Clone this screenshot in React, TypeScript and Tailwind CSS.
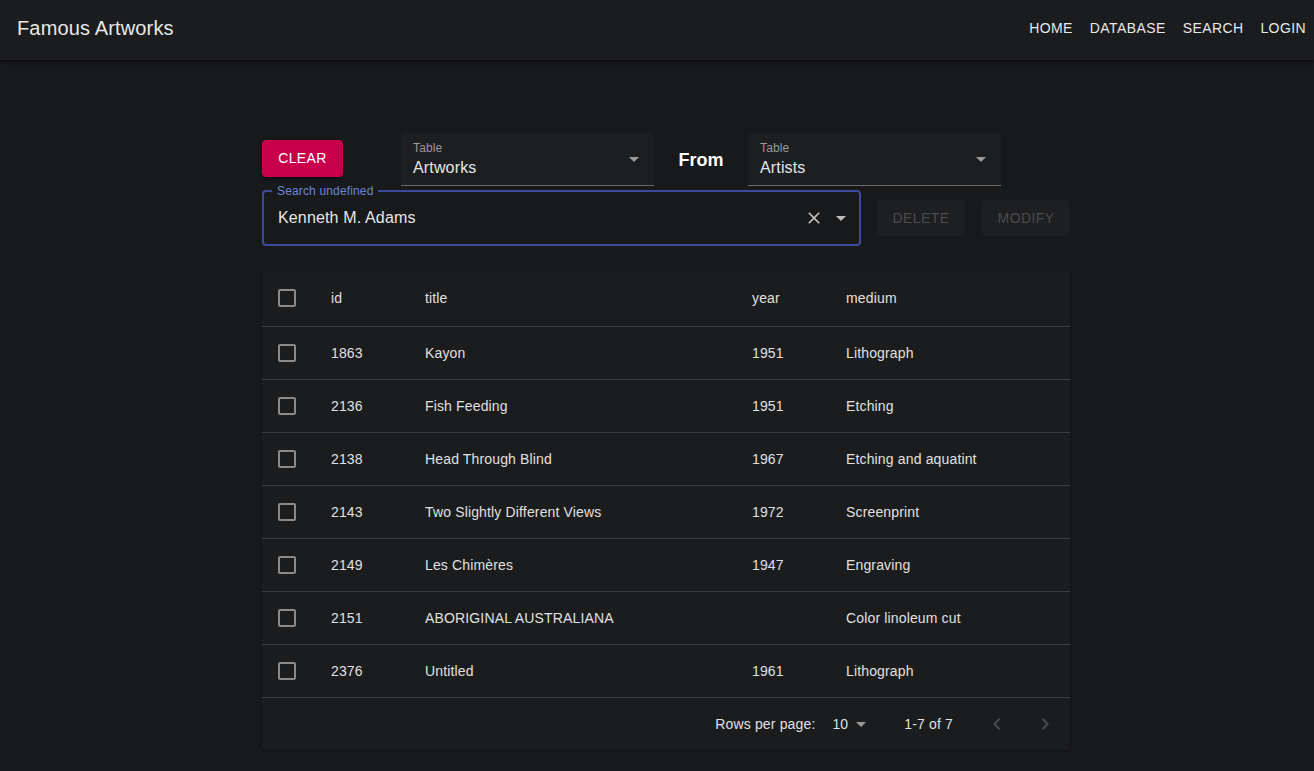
import React from 'react';

const rows = [
  { id: 1863, title: 'Kayon', year: '1951', medium: 'Lithograph' },
  { id: 2136, title: 'Fish Feeding', year: '1951', medium: 'Etching' },
  { id: 2138, title: 'Head Through Blind', year: '1967', medium: 'Etching and aquatint' },
  { id: 2143, title: 'Two Slightly Different Views', year: '1972', medium: 'Screenprint' },
  { id: 2149, title: 'Les Chimères', year: '1947', medium: 'Engraving' },
  { id: 2151, title: 'ABORIGINAL AUSTRALIANA', year: '', medium: 'Color linoleum cut' },
  { id: 2376, title: 'Untitled', year: '1961', medium: 'Lithograph' },
];

function Caret({ className = '' }: { className?: string }) {
  return (
    <svg viewBox="0 0 24 24" className={className} fill="currentColor">
      <path d="M7 10l5 5 5-5z" />
    </svg>
  );
}

function Checkbox() {
  return <div className="w-[18px] h-[18px] rounded-[2px] border-2 border-[#8a8a8a]" />;
}

function TableSelect({ value }: { value: string }) {
  return (
    <div className="relative w-[253px] h-[53px] bg-[#1d1e20] rounded-t border-b border-[#6b6b6b] px-3 pt-[8px]">
      <div className="text-[12px] leading-[14px] text-[#9a9a9a] tracking-[0.15px]">Table</div>
      <div className="text-[16px] leading-[22px] text-[#e6e6e6] mt-[2px] tracking-[0.15px]">{value}</div>
      <Caret className="absolute right-[8px] top-[14px] w-6 h-6 text-[#9a9a9a]" />
    </div>
  );
}

export default function App() {
  return (
    <div className="min-h-[771px] bg-[#18191b] text-[#e0e0e0]" style={{ fontFamily: '"Liberation Sans", Arial, sans-serif' }}>
      <header className="h-[60px] bg-[#1b1c1e] shadow-[0_2px_4px_rgba(0,0,0,0.5)] flex items-center justify-between pl-[17px] pr-[8px] pb-[4px]">
        <div className="text-[20px] text-[#e8e8e8] tracking-[0.15px]">Famous Artworks</div>
        <nav className="flex items-center gap-[17px] text-[14px] text-[#e8e8e8] tracking-[0.4px]">
          <span>HOME</span>
          <span>DATABASE</span>
          <span>SEARCH</span>
          <span>LOGIN</span>
        </nav>
      </header>

      <main className="w-[808px] ml-[262px] pt-[73px]">
        <div className="flex items-center h-[53px]">
          <button className="w-[81px] h-[37px] rounded bg-[#c8004b] text-white text-[14px] tracking-[0.4px] mt-[-2px] shadow-[0_2px_3px_rgba(0,0,0,0.4)]">
            CLEAR
          </button>
          <div className="ml-[58px]">
            <TableSelect value="Artworks" />
          </div>
          <div className="w-[94px] text-center text-[18px] font-bold text-white mt-[2px]">From</div>
          <TableSelect value="Artists" />
        </div>

        <div className="flex items-center mt-[4px]">
          <div className="relative w-[599px] h-[56px] rounded border-2 border-[#3a4a9c] flex items-center pl-[14px] pr-[6px]">
            <span className="absolute left-[8px] top-[-8px] px-[5px] bg-[#18191b] text-[12px] leading-[14px] text-[#6c86d4] tracking-[0.15px]">Search undefined</span>
            <span className="flex-1 text-[16px] text-[#e6e6e6] tracking-[0.15px]">Kenneth M. Adams</span>
            <svg viewBox="0 0 24 24" className="w-5 h-5 text-[#bdbdbd] mr-[5px]" fill="currentColor">
              <path d="M19 6.41L17.59 5 12 10.59 6.41 5 5 6.41 10.59 12 5 17.59 6.41 19 12 13.41 17.59 19 19 17.59 13.41 12z" />
            </svg>
            <Caret className="w-6 h-6 text-[#bdbdbd]" />
          </div>
          <button className="ml-[16px] w-[88px] h-[36px] rounded bg-[#1e1f21] text-[14px] text-[#4a4b4d] font-medium tracking-[0.4px]">DELETE</button>
          <button className="ml-[17px] w-[88px] h-[36px] rounded bg-[#1e1f21] text-[14px] text-[#4a4b4d] font-medium tracking-[0.4px]">MODIFY</button>
        </div>

        <div className="mt-[26px] bg-[#1b1c1e] rounded shadow-[0_1px_3px_rgba(0,0,0,0.4)] text-[14px] tracking-[0.15px]">
          <div className="h-[55px] flex items-center border-b border-[#3b3c3e] pb-[2px]">
            <div className="w-[69px] pl-[16px]"><Checkbox /></div>
            <div className="w-[94px]">id</div>
            <div className="w-[327px]">title</div>
            <div className="w-[94px]">year</div>
            <div>medium</div>
          </div>
          {rows.map((r) => (
            <div key={r.id} className="h-[53px] flex items-center border-b border-[#3b3c3e]">
              <div className="w-[69px] pl-[16px]"><Checkbox /></div>
              <div className="w-[94px]">{r.id}</div>
              <div className="w-[327px]">{r.title}</div>
              <div className="w-[94px]">{r.year}</div>
              <div>{r.medium}</div>
            </div>
          ))}
          <div className="h-[52px] flex items-center justify-end pr-[13px]">
            <span>Rows per page:</span>
            <span className="ml-[17px]">10</span>
            <Caret className="w-6 h-6 text-[#9a9a9a] ml-[1px]" />
            <span className="ml-[31px]">1-7 of 7</span>
            <svg viewBox="0 0 24 24" className="ml-[32px] w-6 h-6 text-[#4a4b4d]" fill="currentColor">
              <path d="M15.41 7.41L14 6l-6 6 6 6 1.41-1.41L10.83 12z" />
            </svg>
            <svg viewBox="0 0 24 24" className="ml-[24px] w-6 h-6 text-[#4a4b4d]" fill="currentColor">
              <path d="M10 6L8.59 7.41 13.17 12l-4.58 4.59L10 18l6-6z" />
            </svg>
          </div>
        </div>
      </main>
    </div>
  );
}
